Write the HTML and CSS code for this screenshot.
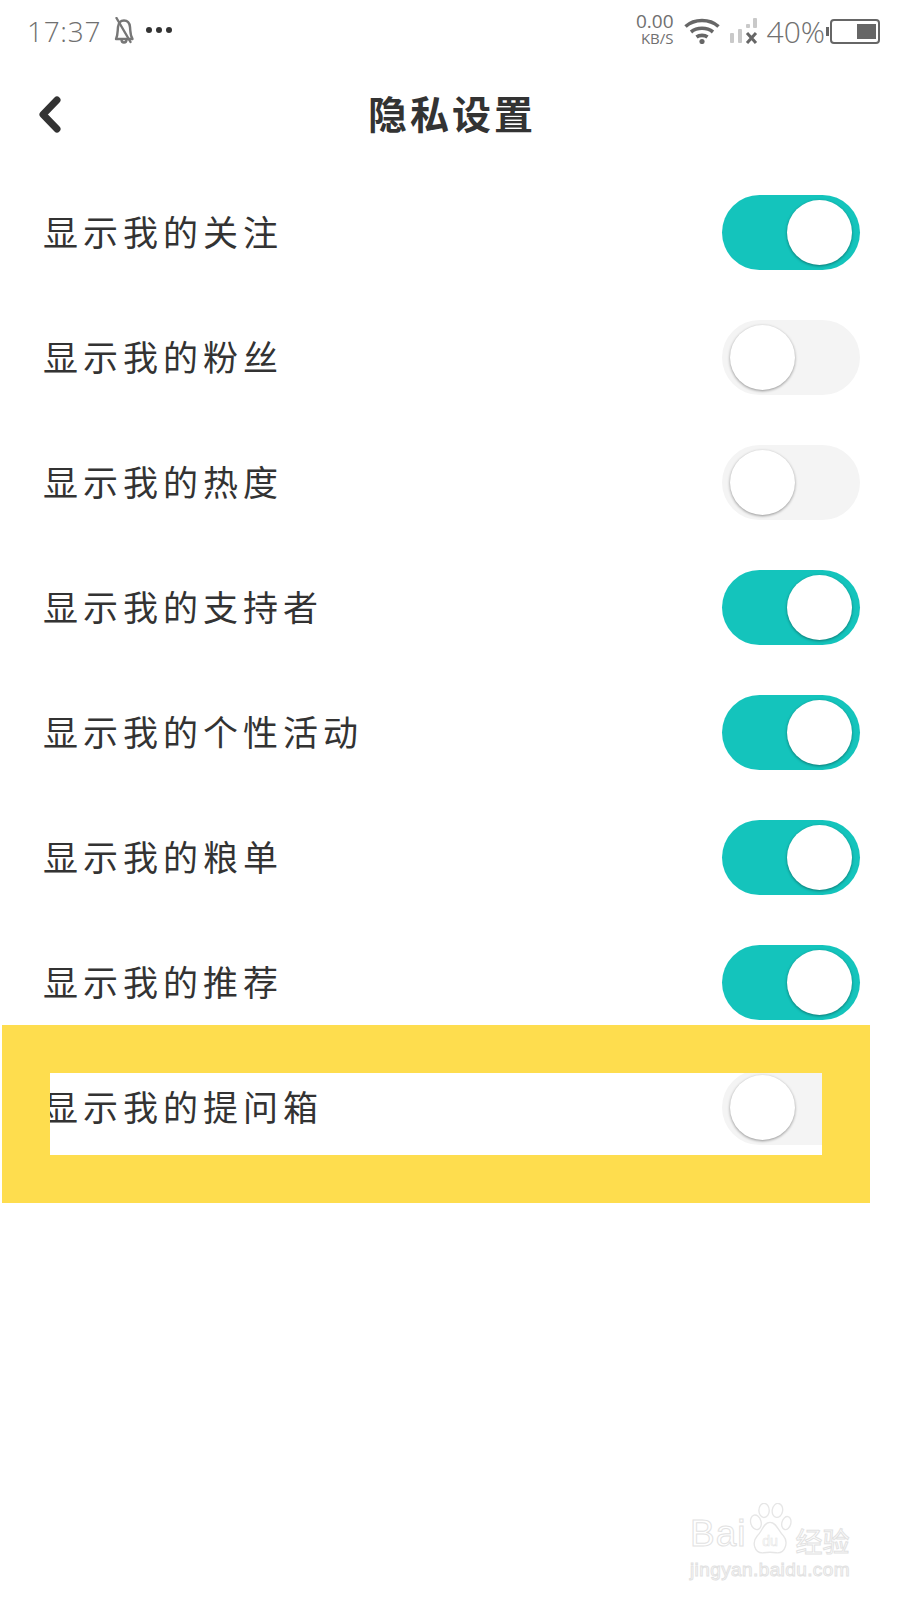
FILE: index.html
```html
<!DOCTYPE html>
<html lang="zh-CN">
<head>
  <meta charset="UTF-8" />
  <title>隐私设置</title>
  <link rel="stylesheet" href="styles.css">
</head>
<body>
  <div class="status-bar">
    <div class="status-left">
      <span class="time">17:37</span>
      <svg class="bell" width="22" height="28" viewBox="0 0 22 28" fill="none" stroke="#777" stroke-width="2.400" stroke-linejoin="round">
        <path d="M3 22 C5 18 4.500 14 5 10 C5.500 5.500 8 3.500 11 3.500 C14 3.500 16.500 5.500 17 10 C17.500 14 17 18 19.500 22 Z"/>
        <path d="M8.500 22.500 C8.500 26.500 13.500 26.500 13.500 22.500"/>
        <path d="M3.500 1 L17.500 25" stroke-linecap="round"/>
      </svg>
      <span class="dots"><i></i><i></i><i></i></span>
    </div>
    <div class="status-right">
      <div class="speed"><span class="speed-num">0.00</span><span class="speed-unit">KB/S</span></div>
      <svg class="wifi" width="36" height="26" viewBox="0 0 36 26" fill="none" stroke="#666" stroke-width="3.600">
        <path d="M1.500 8.500 C10.500 0.500 25.500 0.500 34.500 8.500"/>
        <path d="M7 14 C13 9 23 9 29 14"/>
        <path d="M12.500 19 C15.500 16.800 20.500 16.800 23.500 19"/>
        <circle cx="18" cy="23.500" r="2.600" fill="#666" stroke="none"/>
      </svg>
      <svg class="signal" width="28" height="26" viewBox="0 0 28 26">
        <rect x="0" y="15" width="4" height="10" rx="1" fill="#c9c9c9"/>
        <rect x="8" y="11" width="4" height="14" rx="1" fill="#c9c9c9"/>
        <rect x="16" y="6" width="4" height="4" rx="1" fill="#c9c9c9"/>
        <rect x="23" y="0" width="4" height="10" rx="1" fill="#c9c9c9"/>
        <path d="M17 15 L26 25 M26 15 L17 25" stroke="#666" stroke-width="3"/>
      </svg>
      <span class="battery-pct">40%</span>
      <div class="battery"><div class="battery-level"></div></div>
    </div>
  </div>

  <div class="header">
    <svg class="back" width="24" height="38" viewBox="0 0 24 38" fill="none" stroke="#333" stroke-width="7" stroke-linecap="round" stroke-linejoin="round">
      <path d="M19 4 L5 18.500 L19 33"/>
    </svg>
    <h1 class="title">隐私设置</h1>
  </div>

  <div class="list">
    <div class="row"><span class="label">显示我的关注</span><div class="toggle on"><div class="knob"></div></div></div>
    <div class="row"><span class="label">显示我的粉丝</span><div class="toggle"><div class="knob"></div></div></div>
    <div class="row"><span class="label">显示我的热度</span><div class="toggle"><div class="knob"></div></div></div>
    <div class="row"><span class="label">显示我的支持者</span><div class="toggle on"><div class="knob"></div></div></div>
    <div class="row"><span class="label">显示我的个性活动</span><div class="toggle on"><div class="knob"></div></div></div>
    <div class="row"><span class="label">显示我的粮单</span><div class="toggle on"><div class="knob"></div></div></div>
    <div class="row"><span class="label">显示我的推荐</span><div class="toggle on"><div class="knob"></div></div></div>
    <div class="row"><span class="label">显示我的提问箱</span><div class="toggle"><div class="knob"></div></div></div>
  </div>

  <!-- yellow marker drawn over the last row -->
  <div class="marker"></div>

  <div class="watermark">
    <div class="wm-top">
      <span class="wm-bai">Bai</span>
      <svg class="paw" width="48" height="52" viewBox="0 0 58 70" fill="#fff" stroke="#e6e6e6" stroke-width="1.800">
        <ellipse cx="10" cy="26" rx="7" ry="10" transform="rotate(-15 10 26)"/>
        <ellipse cx="21" cy="10" rx="7" ry="9.500"/>
        <ellipse cx="39" cy="10" rx="7" ry="9.500" transform="rotate(10 39 10)"/>
        <ellipse cx="51" cy="27" rx="6" ry="9" transform="rotate(15 51 27)"/>
        <path d="M29 26 C38 26 40 38 47 44 C54 52 50 68 38 67 C32 66 26 66 20 67 C8 68 4 53 12 44 C19 38 20 26 29 26 Z"/>
        <text x="29" y="58" text-anchor="middle" class="wm-du">du</text>
      </svg>
      <span class="wm-cn">经验</span>
    </div>
    <div class="wm-url">jingyan.baidu.com</div>
  </div>
</body>
</html>
```

FILE: styles.css
```css
body {
  margin: 0;
  width: 900px;
  height: 1600px;
  position: relative;
  overflow: hidden;
  background: #fff;
  color: #333;
  font-family: "Noto Sans CJK SC", "Noto Sans", sans-serif;
}

.status-bar {
  height: 62px;
  display: flex;
  justify-content: space-between;
  align-items: center;
  padding: 0 20px 0 27px;
  color: #707070;
  font-family: "Open Sans", "Noto Sans", sans-serif;
}
.status-left, .status-right {
  display: flex;
  align-items: center;
}
.time {
  font-size: 28px;
  font-weight: 300;
  letter-spacing: 0.700px;
}
.bell {
  margin-left: 12px;
}
.dots {
  display: flex;
  gap: 4px;
  margin-left: 11px;
  margin-top: -3px;
}
.dots i {
  width: 6px;
  height: 6px;
  border-radius: 50%;
  background: #333;
}
.speed {
  display: flex;
  flex-direction: column;
  align-items: flex-end;
  width: 39px;
  margin-top: -5px;
}
.speed-num {
  font-size: 19px;
  line-height: 19px;
}
.speed-unit {
  font-size: 15px;
  line-height: 15px;
}
.wifi {
  margin-left: 10px;
}
.signal {
  margin-left: 10px;
}
.battery-pct {
  font-size: 30px;
  font-weight: 300;
  margin-left: 9px;
}
.battery {
  width: 44px;
  height: 21px;
  margin-left: 5px;
  border: 2.500px solid #666;
  border-radius: 4px;
  display: flex;
  justify-content: flex-end;
  align-items: center;
  padding-right: 2px;
  position: relative;
}
.battery::before {
  content: "";
  position: absolute;
  left: -6px;
  top: 6px;
  width: 3px;
  height: 9px;
  background: #666;
}
.battery-level {
  width: 19px;
  height: 15px;
  background: #666;
}

.header {
  height: 100px;
  padding-bottom: 8px;
  position: relative;
  display: flex;
  justify-content: center;
  align-items: center;
}
.back {
  position: absolute;
  left: 38px;
  top: 34px;
}
.title {
  margin: 0 0 0 4px;
  font-size: 39px;
  font-weight: 700;
  letter-spacing: 3px;
  color: #333;
}

.row {
  height: 125px;
  display: flex;
  justify-content: space-between;
  align-items: center;
  padding: 0 40px 0 43px;
}
.label {
  font-size: 35px;
  letter-spacing: 5px;
  color: #333;
  margin-bottom: 4px;
}
.toggle {
  width: 138px;
  height: 75px;
  border-radius: 38px;
  background: #f4f4f4;
  display: flex;
  align-items: center;
  padding: 0 8px;
  box-sizing: border-box;
}
.toggle.on {
  background: #14c4bc;
  justify-content: flex-end;
}
.knob {
  width: 65px;
  height: 65px;
  border-radius: 50%;
  background: #fff;
  box-shadow: 0 1px 3px rgba(0, 0, 0, 0.4);
  margin-top: -1px;
}

.marker {
  position: absolute;
  left: 2px;
  top: 1025px;
  width: 772px;
  height: 82px;
  border: 48px solid #fedd4e;
}

.watermark {
  position: absolute;
  left: 690px;
  top: 1503px;
  color: #fff;
  font-family: "Liberation Sans", sans-serif;
  -webkit-text-stroke: 1px #e2e2e2;
}
.wm-top {
  display: flex;
  align-items: flex-end;
  height: 52px;
}
.wm-bai {
  font-size: 37px;
  line-height: 38px;
  letter-spacing: 1px;
  margin-bottom: 2px;
}
.paw {
  margin-left: 0;
}
.wm-du {
  font-size: 19px;
  stroke-width: 0.800;
}
.wm-cn {
  font-family: "Noto Sans CJK SC", sans-serif;
  font-size: 27px;
  line-height: 27px;
  margin-left: 1px;
  margin-bottom: 1px;
}
.wm-url {
  font-size: 19px;
  line-height: 22px;
  letter-spacing: 0.400px;
  margin-top: 4px;
}
```
